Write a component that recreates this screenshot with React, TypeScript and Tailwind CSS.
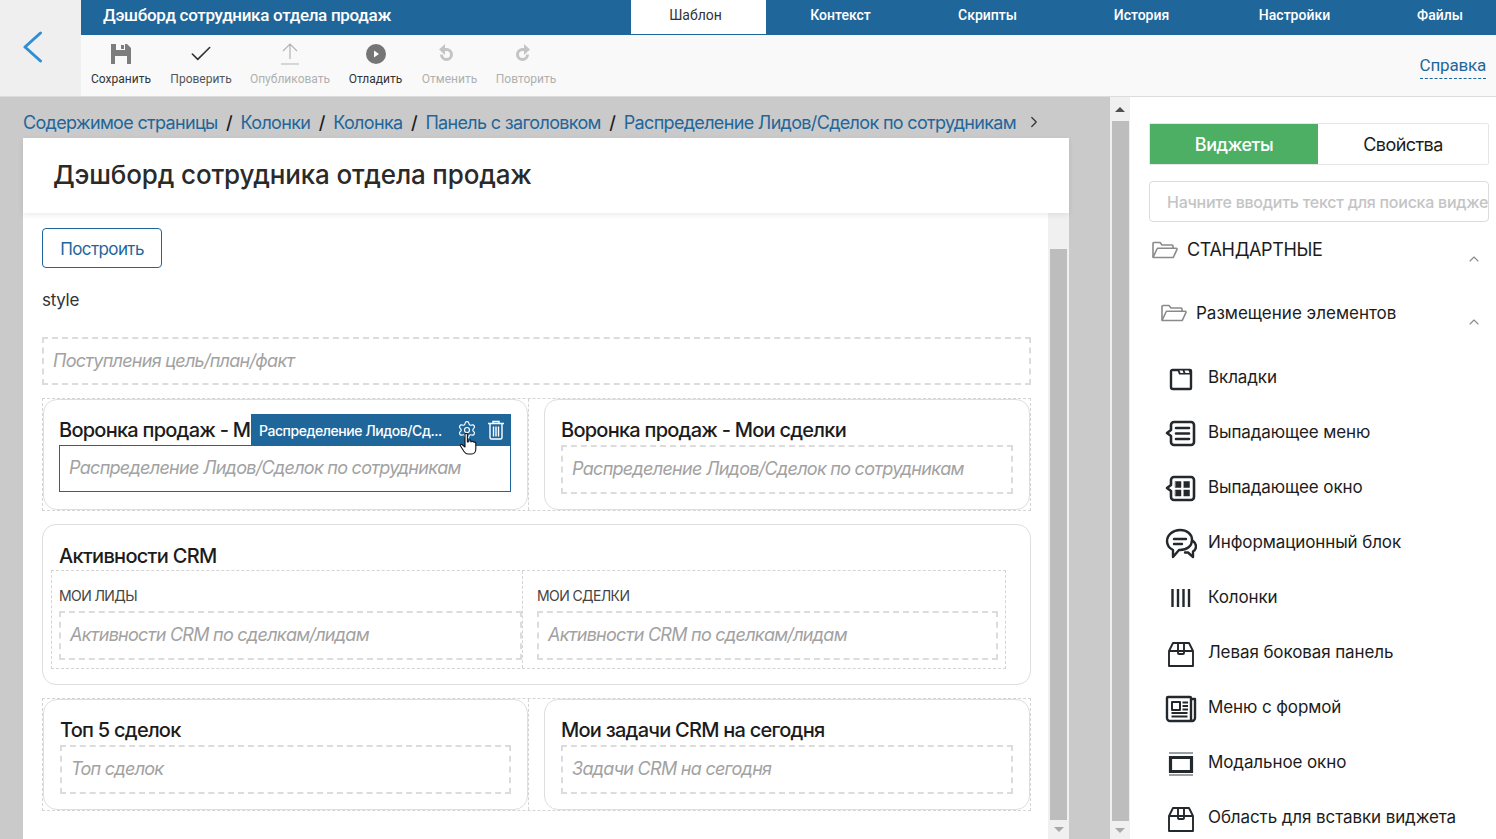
import { ChevronRight, ChevronUp, Check, Settings } from "lucide-react";
import type { ReactNode } from "react";

const inter = "font-['Inter','Liberation_Sans',sans-serif]";
const roboto = "font-['Roboto','Liberation_Sans',sans-serif]";

function Svg({ children }: { children: ReactNode }) {
    return (
        <svg viewBox="0 0 32 32" className="w-8 h-8" fill="none" stroke="#23282d" strokeWidth="2.2" strokeLinejoin="round" strokeLinecap="round">
            {children}
        </svg>
    );
}

const BoxIcon = (
    <Svg>
        <path d="M4 14h24v15H4zM4 14l4-8h16l4 8M13 6v10a1 1 0 0 0 1 1h4a1 1 0 0 0 1-1V6" strokeWidth="1.9" />
    </Svg>
);

function FolderIcon() {
    return (
        <svg viewBox="0 0 27 18" className="w-[27px] h-[18px] shrink-0" fill="none" stroke="#8a8a8a" strokeWidth="1.6" strokeLinejoin="round">
            <path d="M2 16V2.500a1 1 0 0 1 1-1h6l2 2.500h10a1 1 0 0 1 1 1V7" />
            <path d="M2 16.500 6 8a1 1 0 0 1 1-.7h18.200a.8.800 0 0 1 .8 1.100l-3.500 7.600a1 1 0 0 1-1 .5z" />
        </svg>
    );
}

const widgets: { label: string; icon: ReactNode }[] = [
    {
        label: "Вкладки",
        icon: (
            <Svg>
                <path d="M8 8h17a1 1 0 0 1 1 1v17a1 1 0 0 1-1 1H8a2 2 0 0 1-2-2V9.500A1.500 1.500 0 0 1 8 8z" strokeWidth="2.4" />
                <path d="M12 7h14v5.500H14z" fill="#23282d" stroke="none" />
                <path d="M14.500 8.500h3l1 2.500h-3zM19.500 8.500h4l1 2.500h-4z" fill="#fff" stroke="none" />
            </Svg>
        ),
    },
    {
        label: "Выпадающее меню",
        icon: (
            <Svg>
                <path d="M6 8a3 3 0 0 1 3-3h17a3 3 0 0 1 3 3v17a3 3 0 0 1-3 3H9a3 3 0 0 1-3-3v-6l-4-3 4-3z" strokeWidth="2.6" />
                <path d="M11 11h13M11 16.500h13M11 22h13" strokeWidth="2.6" />
            </Svg>
        ),
    },
    {
        label: "Выпадающее окно",
        icon: (
            <Svg>
                <path d="M6 8a3 3 0 0 1 3-3h17a3 3 0 0 1 3 3v17a3 3 0 0 1-3 3H9a3 3 0 0 1-3-3v-6l-4-3 4-3z" strokeWidth="2.6" />
                <path d="M10.500 9.500h5.500v6h-5.500zM19 9.500h5.500v6H19zM10.500 18h5.500v6h-5.500zM19 18h5.500v6H19z" fill="#23282d" strokeWidth="0.5" />
            </Svg>
        ),
    },
    {
        label: "Информационный блок",
        icon: (
            <Svg>
                <path d="M15 3C8 3 2 8 2 14c0 4 2 7 6 9v7l6-7h1c7 0 12-4 12-10S22 3 15 3z" strokeWidth="2.4" />
                <path d="M9 12h12M9 17h8" strokeWidth="2.4" />
                <path d="M28 14c2 1.500 3 3.500 3 5.500 0 2.500-1.500 4-3 5v5.500l-5-4.500h-3" strokeWidth="2.4" />
            </Svg>
        ),
    },
    {
        label: "Колонки",
        icon: (
            <Svg>
                <path d="M7.500 7v18M13 7v18M18.500 7v18M24 7v18" strokeWidth="2.4" strokeLinecap="butt" />
            </Svg>
        ),
    },
    { label: "Левая боковая панель", icon: BoxIcon },
    {
        label: "Меню с формой",
        icon: (
            <Svg>
                <path d="M2 6a1 1 0 0 1 1-1h22a1 1 0 0 1 1 1v23H5a3 3 0 0 1-3-3zM26 7h4v19a3 3 0 0 1-3 3h-1" strokeWidth="2.4" />
                <path d="M7 10h8v8H7z" strokeWidth="2" />
                <path d="M17.500 10.500h5.500M17.500 14h5.500M17.500 17.500h5.500M6.500 21h16M6.500 24.500h16" strokeWidth="1.8" strokeLinecap="butt" />
            </Svg>
        ),
    },
    {
        label: "Модальное окно",
        icon: (
            <Svg>
                <path d="M4 6h24M4 28h24" stroke="#9ca0a3" strokeWidth="1.8" strokeLinecap="butt" />
                <path d="M5.500 10.500h21v14h-21z" strokeWidth="3.2" strokeLinejoin="miter" />
            </Svg>
        ),
    },
    { label: "Область для вставки виджета", icon: BoxIcon },
];

function ToolButton({ label, tone, className, icon }: { label: string; tone: string; className: string; icon: ReactNode }) {
    return (
        <div className={`flex flex-col items-center ${className}`}>
            <div className="h-[30px] flex items-center justify-center">{icon}</div>
            <span className={`mt-[2px] text-[12px] leading-[16px] whitespace-nowrap ${tone}`}>{label}</span>
        </div>
    );
}

function Placeholder({ text, className }: { text: string; className: string }) {
    return (
        <div className={`flex items-center border-2 border-dashed border-[#dcdcdc] px-[9px] pb-[2px] text-[18px] italic tracking-[-0.72px] text-[#a2a2a2] ${className}`}>
            {text}
        </div>
    );
}

function PanelCard({ title, text, width }: { title: string; text: string; width: string }) {
    return (
        <div className={`${width} rounded-[14px] border border-[#dedede] bg-white px-[16px] pt-[18px] pb-[15px]`}>
            <div className="text-[20px] leading-[24px] font-medium text-[#1c1c1c] tracking-[-0.75px] mb-[3px]">{title}</div>
            <Placeholder text={text} className="w-full h-[49px]" />
        </div>
    );
}

export default function App() {
    return (
        <div className={`${inter} w-[1496px] h-[839px] overflow-hidden flex flex-col bg-white text-[#1c1c1c]`}>
            {/* top bar */}
            <div className="flex h-[97px] shrink-0 border-b border-[#dcdcdc]">
                <div className="w-[81px] bg-[#efefef] flex items-center pl-[22px]">
                    <svg viewBox="0 0 21 32" className="w-[21px] h-[32px] -mt-[3px]" fill="none" stroke="#2f8fd4" strokeWidth="3" strokeLinecap="round" strokeLinejoin="round">
                        <path d="M18.500 2 3 16l15.500 14" />
                    </svg>
                </div>
                <div className="flex-1 flex flex-col">
                    <div className={`${roboto} h-[35px] bg-[#1f669b] flex text-white text-[14px] pb-[3px]`}>
                        <div className="w-[550px] pl-[22px] flex items-center text-[17px] font-medium tracking-[-0.3px]">Дэшборд сотрудника отдела продаж</div>
                        <div className="w-[135px] h-[34px] bg-white text-[#333] flex items-center justify-center pb-[3px] pr-[6px]">Шаблон</div>
                        <div className="w-[149px] flex items-center justify-center font-medium pb-[2px]">Контекст</div>
                        <div className="w-[145px] flex items-center justify-center font-medium pb-[2px]">Скрипты</div>
                        <div className="w-[163px] flex items-center justify-center font-medium pb-[2px]">История</div>
                        <div className="w-[143px] flex items-center justify-center font-medium pb-[2px]">Настройки</div>
                        <div className="flex-1 flex items-center justify-center font-medium pl-[18px] pb-[2px]">Файлы</div>
                    </div>
                    <div className={`${roboto} flex-1 bg-[#f9f9f9] flex items-start pl-[5px] pt-[4px]`}>
                        <ToolButton
                            label="Сохранить"
                            tone="text-[#333]"
                            className="w-[70px]"
                            icon={
                                <svg viewBox="0 0 22 22" className="w-[22px] h-[22px]" fill="#7d7d7d">
                                    <path fillRule="evenodd" d="M1 1h16l4 4v16H1zM6 1v6h9V1zM11 2h3v4h-3zM5 13v8h12v-8z" />
                                </svg>
                            }
                        />
                        <ToolButton label="Проверить" tone="text-[#555]" className="w-[90px]" icon={<Check className="w-[26px] h-[26px] text-[#333]" strokeWidth={1.5} />} />
                        <ToolButton
                            label="Опубликовать"
                            tone="text-[#b0b0b0]"
                            className="w-[88px]"
                            icon={
                                <svg viewBox="0 0 22 24" className="w-[22px] h-[24px]" fill="none" stroke="#b3b3b3" strokeWidth="1.2">
                                    <path d="M11 17V2M4 9l7-7 7 7M2 22h18" />
                                </svg>
                            }
                        />
                        <ToolButton
                            label="Отладить"
                            tone="text-[#333]"
                            className="w-[83px]"
                            icon={
                                <svg viewBox="0 0 20 20" className="w-[20px] h-[20px]">
                                    <circle cx="10" cy="10" r="10" fill="#757575" />
                                    <path d="M8 6.500 13 10l-5 3.500z" fill="#fff" />
                                </svg>
                            }
                        />
                        <ToolButton
                            label="Отменить"
                            tone="text-[#b0b0b0]"
                            className="w-[65px]"
                            icon={
                                <svg viewBox="0 0 18 20" className="w-[18px] h-[20px] -ml-[8px] -mt-[2px]">
                                    <path d="M6 6.500h3.500a5 5 0 1 1-5 5" fill="none" stroke="#c4c4c4" strokeWidth="3" />
                                    <path d="M8 1 2 6.500 8 12z" fill="#c4c4c4" />
                                </svg>
                            }
                        />
                        <ToolButton
                            label="Повторить"
                            tone="text-[#b0b0b0]"
                            className="w-[78px] ml-[5px]"
                            icon={
                                <svg viewBox="0 0 18 20" className="w-[18px] h-[20px] -ml-[6px] -mt-[2px]">
                                    <path d="M12 6.500H8.500a5 5 0 1 0 5 5" fill="none" stroke="#c4c4c4" strokeWidth="3" />
                                    <path d="M10 1l6 5.500L10 12z" fill="#c4c4c4" />
                                </svg>
                            }
                        />
                        <div className="ml-auto mr-[10px] mt-[13px] text-[17px] leading-[26px] tracking-[-0.2px] text-[#1f669b] border-b border-dashed border-[#1f669b]">Справка</div>
                    </div>
                </div>
            </div>

            <div className="flex flex-1 min-h-0">
                {/* canvas */}
                <div className="w-[1110px] shrink-0 bg-[#cacaca] pl-[23px] pr-[41px] flex flex-col min-h-0">
                    <div className="h-[41px] shrink-0 flex items-center gap-[8.5px] pt-[9px] text-[18px] tracking-[-0.67px] text-[#1f669b] whitespace-nowrap">
                        <span>Содержимое страницы</span>
                        <span className="text-[#1c1c1c] font-medium">/</span>
                        <span>Колонки</span>
                        <span className="text-[#1c1c1c] font-medium">/</span>
                        <span>Колонка</span>
                        <span className="text-[#1c1c1c] font-medium">/</span>
                        <span>Панель с заголовком</span>
                        <span className="text-[#1c1c1c] font-medium">/</span>
                        <span>Распределение Лидов/Сделок по сотрудникам</span>
                        <ChevronRight className="w-[18px] h-[18px] text-[#333] ml-[1px]" strokeWidth={1.6} />
                    </div>
                    <div className="flex-1 min-h-0 flex flex-col bg-white">
                        <div className="h-[75px] shrink-0 flex items-center pl-[30px] pb-[2px] text-[26px] font-medium tracking-[-0.15px] text-[#2a2a2a] shadow-[0_2px_6px_rgba(0,0,0,0.08)] relative">
                            Дэшборд сотрудника отдела продаж
                        </div>
                        <div className="flex flex-1 min-h-0">
                            <div className="flex-1 min-w-0 pl-[19px] pr-[17px] pt-[15px]">
                                <div className="w-[120px] h-[40px] pt-[3px] rounded-[4px] border border-[#1f669b] text-[#1f669b] text-[17px] tracking-[-0.6px] flex items-center justify-center">Построить</div>
                                <div className="mt-[20px] h-[24px] text-[17px] leading-[24px] tracking-[-0.3px] text-[#333]">style</div>
                                <Placeholder text="Поступления цель/план/факт" className="mt-[25px] h-[48px]" />

                                <div className="mt-[13px] flex gap-[16px] border border-dashed border-[#d4d4d4] relative">
                                    <div className="w-[485px] shrink-0 rounded-[14px] border border-[#dedede] bg-white pl-[15px] pr-[16px] pt-[18px] pb-[17px] relative">
                                        <div className="text-[20px] leading-[24px] font-medium text-[#1c1c1c] tracking-[-0.75px] h-[24px] mb-[3px] whitespace-nowrap overflow-hidden">Воронка продаж - Мои лиды</div>
                                        <div className="h-[47px] border border-[#1f669b] flex items-center pl-[9px] pb-[2px] text-[18px] italic tracking-[-0.72px] text-[#a2a2a2] bg-white">Распределение Лидов/Сделок по сотрудникам</div>
                                        {/* widget toolbar */}
                                        <div className="absolute right-[16px] top-[14px] w-[260px] h-[32px] bg-[#1f669b] flex items-center pl-[8px] pr-[6px] text-white text-[14px] font-medium tracking-[-0.45px]">
                                            <span className="flex-1 whitespace-nowrap">Распределение Лидов/Сд...</span>
                                            <Settings className="w-[20px] h-[20px] mr-[10px]" strokeWidth={1.4} />
                                            <svg viewBox="0 0 18 20" className="w-[18px] h-[20px]" fill="none" stroke="#fff" strokeWidth="1.4">
                                                <path d="M1 3.500h16M6 3.500V1.500h6v2M3 3.500v14a1.500 1.500 0 0 0 1.500 1.500h9a1.500 1.500 0 0 0 1.500-1.500v-14M6.500 6.500v10M9 6.500v10M11.500 6.500v10" />
                                            </svg>
                                        </div>
                                        <svg viewBox="0 0 18 24" className="absolute left-[415px] top-[32px] w-[18px] h-[24px]" fill="#fff" stroke="#111" strokeWidth="1.1" strokeLinejoin="round">
                                            <path d="M6 2.500a1.200 1.200 0 0 1 2.400 0V10l1.400-.3V8.800a1 1 0 0 1 2 0v1l1.200-.1a1 1 0 0 1 1.800.4l.6.100a1 1 0 0 1 1.400 1V17c0 2.500-1.500 5-4 5H9c-2 0-3-1-4-2.500L1.500 14c-.6-1 .8-2.200 1.700-1.300L6 15z" />
                                        </svg>
                                    </div>
                                    <PanelCard title="Воронка продаж - Мои сделки" text="Распределение Лидов/Сделок по сотрудникам" width="flex-1 min-w-0" />
                                    <div className="absolute left-[485px] top-0 bottom-0 border-l border-dashed border-[#d4d4d4]" />
                                </div>

                                <div className="mt-[13px] h-[161px] rounded-[14px] border border-[#dedede] pl-[8px] pr-[24px] pt-[19px]">
                                    <div className="pl-[8px] text-[20px] leading-[24px] font-medium tracking-[-0.7px] text-[#1c1c1c]">Активности CRM</div>
                                    <div className="mt-[2px] flex h-[99px] border border-dashed border-[#d4d4d4]">
                                        <div className="w-[471px] shrink-0 border-r border-dashed border-[#d4d4d4] pl-[7px] pt-[16px]">
                                            <div className="text-[14px] leading-[18px] text-[#444] uppercase tracking-[-0.6px] mb-[6px]">Мои лиды</div>
                                            <Placeholder text="Активности CRM по сделкам/лидам" className="h-[49px]" />
                                        </div>
                                        <div className="flex-1 min-w-0 pl-[14px] pr-[7px] pt-[16px]">
                                            <div className="text-[14px] leading-[18px] text-[#444] uppercase tracking-[-0.6px] mb-[6px]">Мои сделки</div>
                                            <Placeholder text="Активности CRM по сделкам/лидам" className="h-[49px]" />
                                        </div>
                                    </div>
                                </div>

                                <div className="mt-[13px] flex gap-[16px] border border-dashed border-[#d4d4d4] relative">
                                    <PanelCard title="Топ 5 сделок" text="Топ сделок" width="w-[485px] shrink-0" />
                                    <PanelCard title="Мои задачи CRM на сегодня" text="Задачи CRM на сегодня" width="flex-1 min-w-0" />
                                    <div className="absolute left-[485px] top-0 bottom-0 border-l border-dashed border-[#d4d4d4]" />
                                </div>
                            </div>
                            {/* inner scrollbar */}
                            <div className="w-[21px] shrink-0 bg-[#f0f0f0] flex flex-col items-center">
                                <div className="h-[36px] w-full" />
                                <div className="w-[17px] flex-1 bg-[#bdbdbd]" />
                                <div className="h-[19px] flex items-center justify-center">
                                    <div className="w-0 h-0 border-x-[5px] border-x-transparent border-t-[5px] border-t-[#a8a8a8]" />
                                </div>
                            </div>
                        </div>
                    </div>
                </div>

                {/* outer scrollbar */}
                <div className="w-[20px] shrink-0 bg-[#f0f0f0] flex flex-col items-center">
                    <div className="h-[24px] flex items-center justify-center">
                        <div className="w-0 h-0 border-x-[5px] border-x-transparent border-b-[5px] border-b-[#505050]" />
                    </div>
                    <div className="w-[17px] flex-1 bg-[#bdbdbd]" />
                    <div className="h-[18px] flex items-center justify-center">
                        <div className="w-0 h-0 border-x-[5px] border-x-transparent border-t-[5px] border-t-[#a8a8a8]" />
                    </div>
                </div>

                {/* right panel */}
                <div className="flex-1 min-w-0 pl-[19px] pr-[7px] pt-[26px] overflow-hidden">
                    <div className="flex h-[42px] rounded-[2px] border border-[#e6e6e6] text-[18px]">
                        <div className="w-[168px] bg-[#4caf63] text-white font-medium flex items-center justify-center tracking-[-0.5px]">Виджеты</div>
                        <div className="flex-1 flex items-center justify-center text-[#1c1c1c] tracking-[-0.55px]">Свойства</div>
                    </div>
                    <div className="mt-[16px] h-[41px] rounded-[4px] border border-[#dcdcdc] flex items-center pl-[17px] text-[16px] font-medium tracking-[-0.25px] text-[#c4c4c4] whitespace-nowrap overflow-hidden">
                        Начните вводить текст для поиска виджета
                    </div>
                    <div className="mt-[14px] flex items-start h-[63px] pl-[2px]">
                        <div className="h-[28px] flex items-center"><FolderIcon /></div>
                        <span className="ml-[9px] text-[18px] leading-[28px] tracking-[-0.35px]">СТАНДАРТНЫЕ</span>
                        <ChevronUp className="ml-auto mr-[7px] mt-[15px] w-[16px] h-[16px] text-[#8a8a8a]" strokeWidth={1.6} />
                    </div>
                    <div className="flex items-start h-[51px] pl-[11px]">
                        <div className="h-[28px] flex items-center"><FolderIcon /></div>
                        <span className="ml-[9px] text-[17px] leading-[28px]">Размещение элементов</span>
                        <ChevronUp className="ml-auto mr-[7px] mt-[15px] w-[16px] h-[16px] text-[#8a8a8a]" strokeWidth={1.6} />
                    </div>
                    <div className="flex flex-col pl-[16px]">
                        {widgets.map((w) => (
                            <div key={w.label} className="h-[55px] flex items-center shrink-0">
                                <div className="w-[32px] h-[32px] shrink-0">{w.icon}</div>
                                <span className="ml-[11px] text-[17px] tracking-[-0.1px] whitespace-nowrap">{w.label}</span>
                            </div>
                        ))}
                    </div>
                </div>
            </div>
        </div>
    );
}
